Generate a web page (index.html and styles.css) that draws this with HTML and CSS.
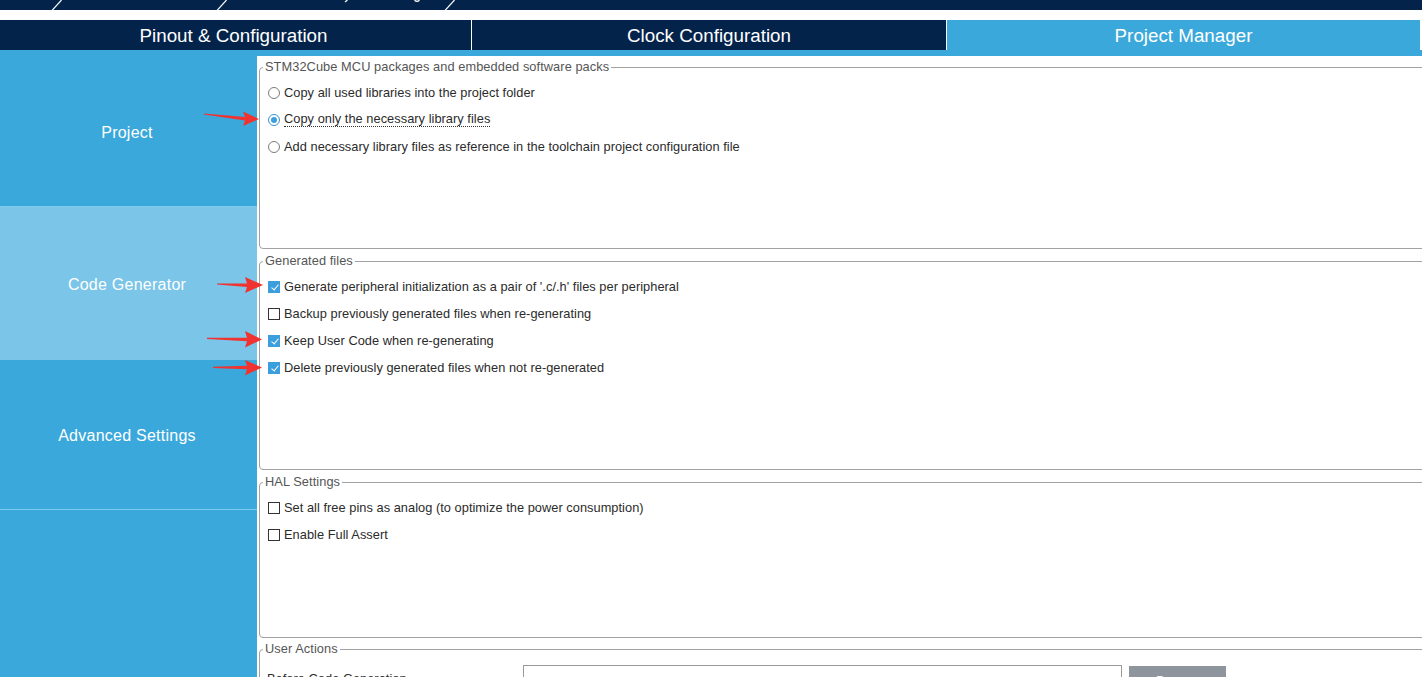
FILE: index.html
```html
<!DOCTYPE html>
<html lang="en">
<head>
<meta charset="utf-8">
<title>Project Manager</title>
<link rel="stylesheet" href="styles.css">
</head>
<body>
<div class="topbar">
  <svg class="crumbs" width="1422" height="10" viewBox="0 0 1422 10">
    <path d="M52 10.5 L61.5 0" stroke="#fff" stroke-width="1.2" fill="none"/>
    <path d="M217 10.5 L226.5 0" stroke="#fff" stroke-width="1.2" fill="none"/>
    <path d="M445 10.5 L454.5 0" stroke="#fff" stroke-width="1.2" fill="none"/>
    <path d="M345 2 L347.5 0" stroke="#fff" stroke-width="1.2" fill="none"/>
    <path d="M414.5 0.3 Q417 2.4 419.5 0.3" stroke="#fff" stroke-width="1.4" fill="none"/>
  </svg>
</div>
<div class="spacer"></div>
<nav class="tabs">
  <div class="tab t1">Pinout &amp; Configuration</div>
  <div class="tab t2">Clock Configuration</div>
  <div class="tab t3">Project Manager</div>
</nav>
<div class="tabline"></div>
<div class="main">
  <aside class="sidebar">
    <div class="side-item first">Project</div>
    <div class="side-item active">Code Generator</div>
    <div class="side-item last">Advanced Settings</div>
  </aside>
  <section class="content">
    <fieldset class="group g1">
      <legend>STM32Cube MCU packages and embedded software packs</legend>
      <div class="opts">
        <div class="opt"><span class="radio"></span><span>Copy all used libraries into the project folder</span></div>
        <div class="opt"><span class="radio on"></span><span class="focus">Copy only the necessary library files</span></div>
        <div class="opt"><span class="radio"></span><span>Add necessary library files as reference in the toolchain project configuration file</span></div>
      </div>
    </fieldset>
    <fieldset class="group g2">
      <legend>Generated files</legend>
      <div class="opts">
        <div class="opt"><span class="check on"></span><span>Generate peripheral initialization as a pair of '.c/.h' files per peripheral</span></div>
        <div class="opt"><span class="check"></span><span>Backup previously generated files when re-generating</span></div>
        <div class="opt"><span class="check on"></span><span>Keep User Code when re-generating</span></div>
        <div class="opt"><span class="check on"></span><span>Delete previously generated files when not re-generated</span></div>
      </div>
    </fieldset>
    <fieldset class="group g3">
      <legend>HAL Settings</legend>
      <div class="opts">
        <div class="opt"><span class="check"></span><span>Set all free pins as analog (to optimize the power consumption)</span></div>
        <div class="opt"><span class="check"></span><span>Enable Full Assert</span></div>
      </div>
    </fieldset>
    <fieldset class="group g4">
      <legend>User Actions</legend>
      <div class="action-row">
        <span class="action-label">Before Code Generation</span>
        <span class="action-input"></span>
        <span class="browse">Browse</span>
      </div>
    </fieldset>
  </section>
</div>
<svg class="arrows" width="1422" height="677" viewBox="0 0 1422 677">
  <polygon fill="#f03330" points="204,113.4 245,116.9 243,111.5 259,119 243,126 245,120.6 204,114.6"/>
  <polygon fill="#f03330" points="217,283.4 247,283.4 245,277 263,285 245,293 247,287 217,284.6"/>
  <polygon fill="#f03330" points="207,337.7 247,337.8 245,331 262,339.5 245,347.5 247,341.2 207,338.9"/>
  <polygon fill="#f03330" points="213,366.7 247,365.8 245,360 262,367.5 245,375.5 247,369.2 213,367.9"/>
</svg>
</body>
</html>
```
FILE: styles.css
```css
* { box-sizing: border-box; }
body {
  margin: 0;
  width: 1422px;
  height: 677px;
  overflow: hidden;
  position: relative;
  background: #fff;
  font-family: "Liberation Sans", Arial, sans-serif;
}
.topbar { height: 10px; background: #03234b; }
.crumbs { display: block; }
.spacer { height: 10px; background: #fff; }
.tabs { display: flex; gap: 1px; height: 30px; background: #fff; }
.tab {
  background: #03234b;
  color: #fff;
  font-size: 18.8px;
  display: flex;
  align-items: center;
  justify-content: center;
  padding-top: 1px;
}
.t1 { width: 471px; padding-right: 4px; }
.t2 { width: 474px; }
.t3 { width: 473px; background: #3aa8db; }
.tabline { height: 6px; background: #3aa8db; }
.main { display: flex; height: 621px; }
.sidebar {
  width: 257px;
  flex: none;
  background: #3aa8db;
  color: #fff;
  font-size: 16px;
  letter-spacing: 0.25px;
  display: flex;
  flex-direction: column;
}
.side-item {
  display: flex;
  align-items: center;
  justify-content: center;
  padding: 3px 3px 0 0;
}
.first { height: 151px; border-bottom: 1px solid #7dcbf0; }
.active { height: 153px; background: #7ac5e8; }
.last { height: 150px; border-bottom: 1px solid #7dcbf0; }
.content { flex: 1; overflow: hidden; padding-left: 2px; }
.group {
  margin: 0;
  padding: 0;
  width: 1300px;
  border: 1px solid #a2a2a2;
  border-radius: 4px;
  min-width: 0;
}
.group legend {
  font-size: 12.8px;
  line-height: 14px;
  letter-spacing: 0.07px;
  color: #555;
  padding: 0 2px;
  margin-left: 3px;
}
.g1 { margin-top: 4px; height: 189px; }
.g2 { margin-top: 5px; height: 216px; }
.g3 { margin-top: 5px; height: 163px; }
.g4 { margin-top: 4px; height: 80px; }
.opts { padding-top: 5px; }
.opt {
  display: flex;
  align-items: center;
  height: 27px;
  padding-left: 8px;
  gap: 4px;
  font-size: 12.8px;
  letter-spacing: 0.04px;
  color: #2b2b2b;
}
.focus { border-bottom: 1px dotted #333; line-height: 14px; }
.radio {
  width: 12px;
  height: 12px;
  border: 1px solid #7a7a7a;
  border-radius: 50%;
  background: #fff;
  display: flex;
  align-items: center;
  justify-content: center;
  flex: none;
}
.radio.on { border-color: #3c8fcf; }
.radio.on::after {
  content: "";
  width: 6px;
  height: 6px;
  border-radius: 50%;
  background: #3a9fdc;
}
.check {
  width: 12px;
  height: 12px;
  border: 1px solid #333;
  background: #fff;
  flex: none;
  position: relative;
}
.check.on { background: #3a9fdc; border-color: #3a9fdc; }
.check.on::after {
  content: "";
  position: absolute;
  left: 3.5px;
  top: 1px;
  width: 3px;
  height: 6px;
  border-right: 1.6px solid #fff;
  border-bottom: 1.6px solid #fff;
  transform: rotate(40deg);
}
.action-row {
  display: flex;
  align-items: flex-start;
  padding: 9px 0 0 7px;
  font-size: 12.8px;
  letter-spacing: 0.04px;
  color: #2b2b2b;
}
.action-label { width: 256px; padding-top: 6px; }
.action-input {
  width: 599px;
  height: 24px;
  border: 1px solid #9a9a9a;
  background: #fff;
}
.browse {
  width: 97px;
  height: 24px;
  margin-left: 7px;
  margin-top: 1px;
  background: #8e959c;
  color: #fff;
  text-align: center;
  padding-top: 7px;
  font-size: 12.8px;
}
.arrows { position: absolute; left: 0; top: 0; pointer-events: none; }
```
